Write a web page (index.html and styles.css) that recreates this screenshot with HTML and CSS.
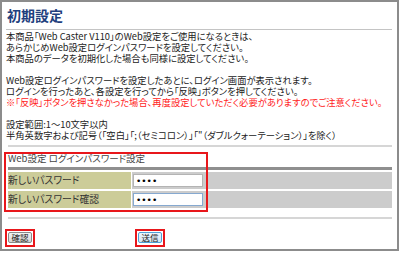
FILE: index.html
```html
<!DOCTYPE html>
<html lang="ja">
<head>
    <meta charset="UTF-8">
    <meta name="viewport" content="width=device-width, initial-scale=1.0">
    <title>初期設定</title>
    <link rel="stylesheet" href="styles.css">
</head>
<body>
    <div class="frame">
        <h1 class="page-title">初期設定</h1>

        <div class="intro">
            <p>本商品「Web Caster V110」のWeb設定をご使用になるときは、<br>あらかじめWeb設定ログインパスワードを設定してください。<br>本商品のデータを初期化した場合も同様に設定してください。</p>
            <p>Web設定ログインパスワードを設定したあとに、ログイン画面が表示されます。<br>ログインを行ったあと、各設定を行ってから「反映」ボタンを押してください。<br><span class="warn">※「反映」ボタンを押さなかった場合、再度設定していただく必要がありますのでご注意ください。</span></p>
            <p>設定範囲:1～10文字以内<br>半角英数字および記号（「空白」「;（セミコロン）」「"（ダブルクォーテーション）」を除く）</p>
        </div>

        <div class="pw-section">
            <div class="pw-caption">Web設定 ログインパスワード設定</div>
            <div class="pw-table">
                <div class="pw-head"></div>
                <label class="pw-label" for="newPassword">新しいパスワード</label>
                <div class="pw-field"><input type="password" id="newPassword" class="pw-input" value="abcd"></div>
                <label class="pw-label" for="confirmPassword">新しいパスワード確認</label>
                <div class="pw-field"><input type="password" id="confirmPassword" class="pw-input pw-input-focus" value="abcd"></div>
            </div>
            <span class="mark mark-table"></span>
        </div>

        <div class="actions">
            <div class="btn-cell">
                <span class="mark-box"><button type="button" class="btn">確認</button></span>
            </div>
            <div class="btn-cell">
                <span class="mark-box"><button type="button" class="btn btn-hover">送信</button></span>
            </div>
        </div>
    </div>
</body>
</html>
```

FILE: styles.css
```css
body {
    margin: 0;
    font-family: "Noto Sans CJK JP", sans-serif;
    font-feature-settings: "palt";
    color: #222;
    background: #fff;
}

.frame {
    width: 399px;
    height: 251px;
    box-sizing: border-box;
    border: 2px solid #8c8c8c;
    padding: 0 5px 0 4px;
    overflow: hidden;
}

.page-title {
    margin: 0;
    padding-left: 1px;
    font-size: 14px;
    font-weight: bold;
    line-height: 27px;
    color: #1f3f7e;
    border-bottom: 1px solid #c4c4c4;
}

.intro {
    margin-top: 1px;
    font-size: 9.3px;
    line-height: 11px;
    white-space: nowrap;
}

.intro p {
    margin: 0 0 11px;
}

.intro p:last-child {
    margin-bottom: 0;
}

.warn {
    color: #f22;
}

/* password block */
.pw-section {
    position: relative;
    margin: 4px 0 0 2px;
    border-top: 2px solid #d6d6d6;
}

.pw-caption {
    padding: 6px 0 3px;
    font-size: 9.5px;
    line-height: 11px;
    color: #444;
}

.pw-table {
    display: grid;
    grid-template-columns: 123px 1fr;
    grid-template-rows: 3px 17px 17px;
    gap: 2px 1px;
}

.pw-head {
    grid-column: 1 / -1;
    background: #8f8f8f;
}

.pw-label {
    background: #cccc99;
    font-size: 9.8px;
    line-height: 17px;
    color: #333;
}

.pw-field {
    display: flex;
    align-items: center;
    padding-left: 1px;
    background: #ccc;
}

.pw-input {
    width: 70px;
    height: 13px;
    box-sizing: border-box;
    margin: 0;
    padding: 0 2px;
    border: 1px solid #b4b4b4;
    background: #fff;
    font-family: "DejaVu Sans", sans-serif;
    font-size: 9px;
    color: #000;
    outline: none;
}

.pw-input-focus {
    border-color: #86a9d0;
}

.mark {
    position: absolute;
    box-sizing: border-box;
    border: 2px solid #e8171b;
}

.mark-table {
    left: -4px;
    top: 5px;
    width: 204px;
    height: 60px;
}

/* buttons */
.actions {
    display: flex;
    margin: 9px 0 0 2px;
    padding-top: 3px;
    border-top: 2px solid #d6d6d6;
}

.btn-cell {
    width: 130px;
}

.btn-cell:first-child {
    margin-left: -3px;
}

.mark-box {
    display: inline-flex;
    align-items: center;
    justify-content: center;
    width: 30px;
    height: 18px;
    box-sizing: border-box;
    border: 2px solid #e8171b;
}

.btn {
    height: 11px;
    margin: 0;
    padding: 0 2px;
    border: 1px solid #8a8a8a;
    border-radius: 2px;
    background: linear-gradient(#f2f2f2, #d6d6d6);
    font-family: "Noto Sans CJK JP", sans-serif;
    font-size: 8.5px;
    line-height: 9px;
    color: #222;
}

.btn-hover {
    border-color: #4f9fd6;
    background: linear-gradient(#eef6fc, #d3e6f4);
}
```
